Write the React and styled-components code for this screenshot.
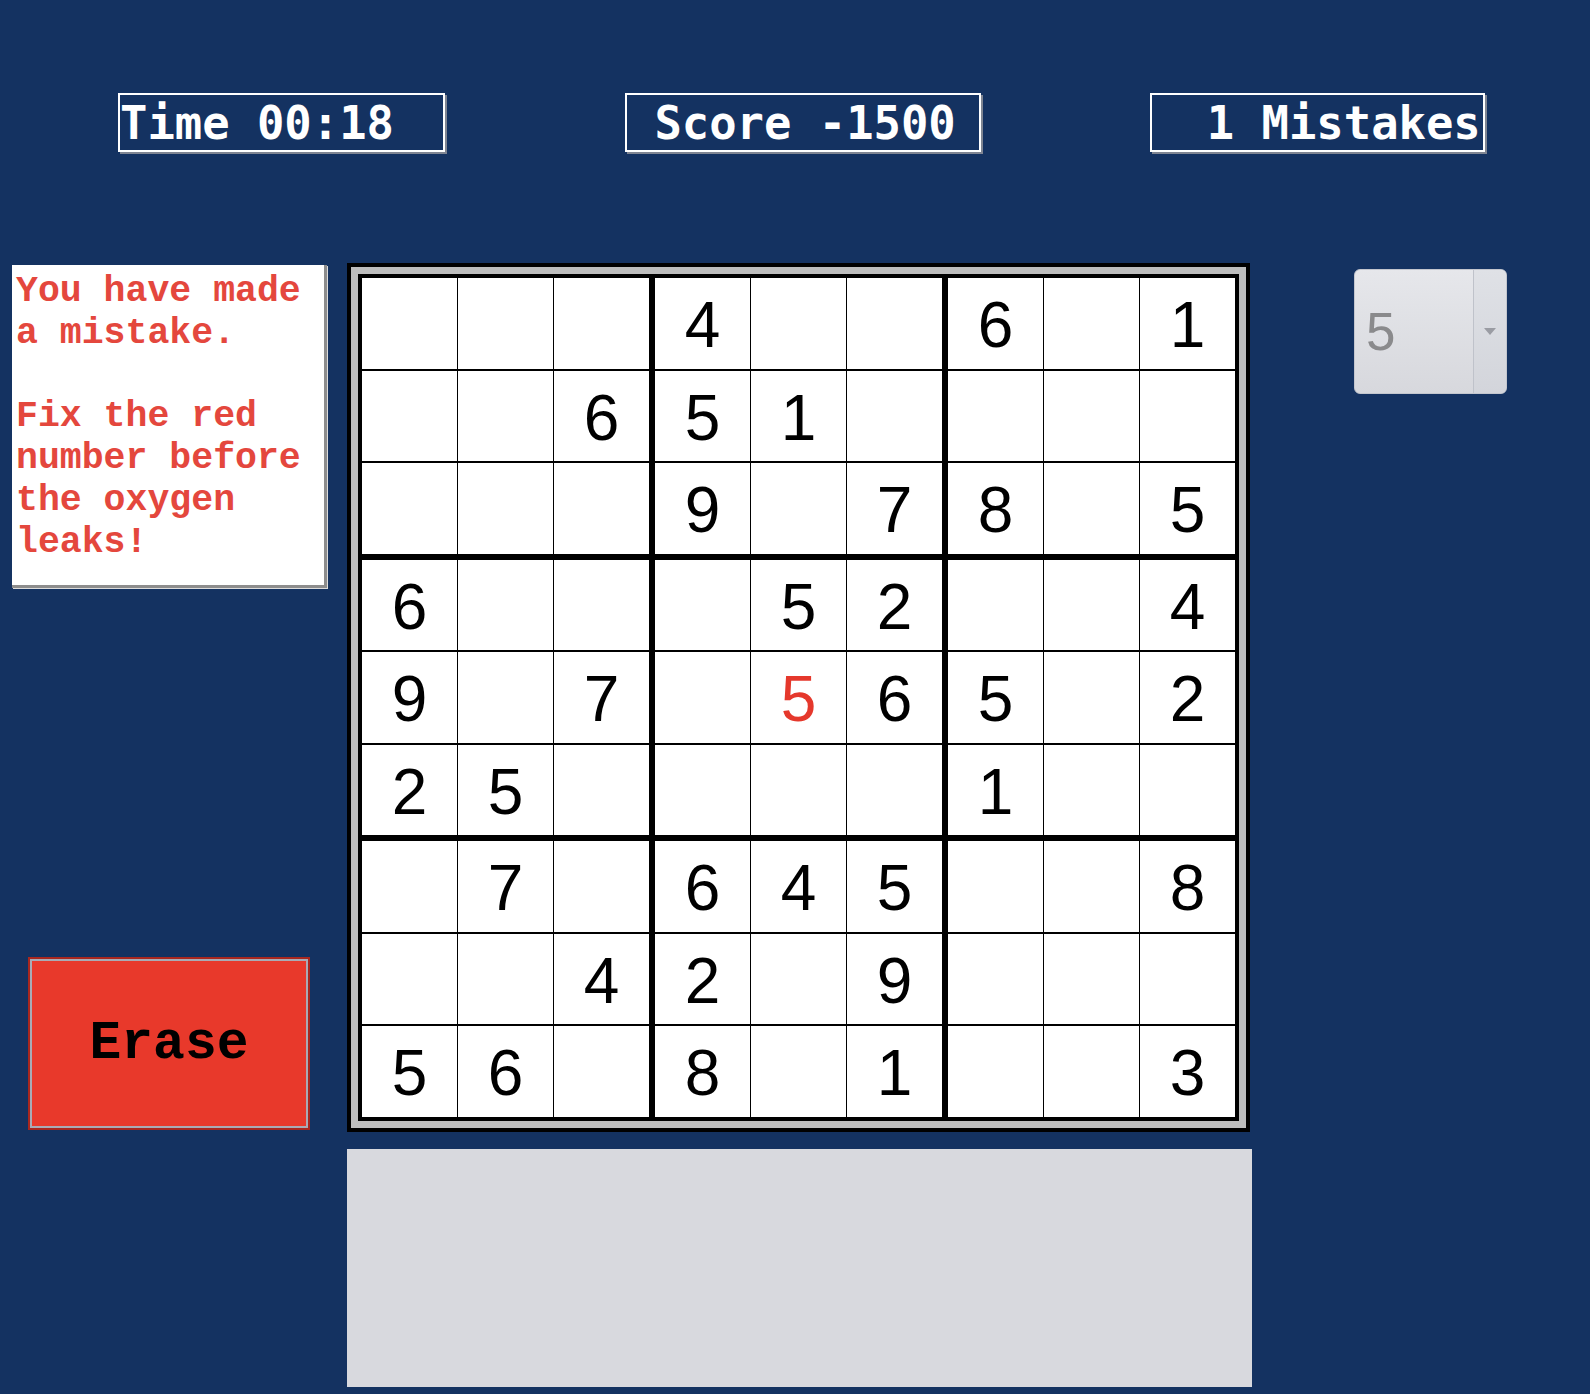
import React from 'react';
import styled, { createGlobalStyle } from 'styled-components';

const Global = createGlobalStyle`
  html, body { margin: 0; padding: 0; background: #143261; }
  body { width: 1590px; height: 1394px; overflow: hidden; }
`;

const Page = styled.div`
  width: 1590px;
  height: 1394px;
  box-sizing: border-box;
  background: #143261;
  padding-top: 93px;
  font-family: "Liberation Sans", Arial, sans-serif;
`;

const Header = styled.div`
  display: flex;
  padding-left: 118px;
`;

const Stat = styled.div`
  box-sizing: border-box;
  width: ${(p) => p.$w}px;
  margin-left: ${(p) => p.$ml || 0}px;
  height: 59px;
  border: 2px solid #ffffff;
  box-shadow: 2px 2px 0 #7f8592;
  padding-top: 3px;
  color: #ffffff;
  font-family: "DejaVu Sans Mono", monospace;
  font-weight: bold;
  font-size: 45.5px;
  line-height: 1;
  white-space: pre;
  display: flex;
  align-items: center;
`;

const Main = styled.div`
  display: flex;
  align-items: flex-start;
  margin-top: 111px;
  padding-left: 12px;
`;

const LeftCol = styled.div`
  width: 315px;
  display: flex;
  flex-direction: column;
`;

const Message = styled.div`
  box-sizing: border-box;
  width: 315px;
  height: 323px;
  margin-top: 2px;
  background: #ffffff;
  border-right: 3px solid #8d8d8d;
  border-bottom: 3px solid #8d8d8d;
  box-shadow: 1px 1px 0 #dcdcdc;
  padding: 6px 0 0 4px;
  color: #e4473d;
  font-family: "Liberation Mono", "Courier New", monospace;
  font-weight: bold;
  font-size: 36.5px;
  line-height: 41.8px;
`;

const EraseButton = styled.button`
  box-sizing: border-box;
  width: 282px;
  height: 173px;
  margin: 369px 0 0 16px;
  background: #e8392b;
  border: 2px solid #a8271f;
  box-shadow: inset 0 0 0 2px #a9abb5;
  color: #000000;
  font-family: "Liberation Mono", "Courier New", monospace;
  font-weight: bold;
  font-size: 53px;
  padding: 0;
  cursor: pointer;
`;

const CenterCol = styled.div`
  width: 905px;
  margin-left: 20px;
  display: flex;
  flex-direction: column;
`;

const Board = styled.div`
  box-sizing: border-box;
  width: 903px;
  border: 4px solid #000000;
  background: #bdbdbd;
  padding: 7px;
`;

const Grid = styled.div`
  display: grid;
  grid-template-columns: repeat(9, auto);
  border: 4px solid #000000;
  background: #ffffff;
`;

const Cell = styled.div`
  width: 95px;
  height: 86.5px;
  padding-top: 4px;
  border-right: ${(p) => (p.$col === 8 ? 0 : p.$col % 3 === 2 ? 6 : 1)}px solid #000;
  border-bottom: ${(p) => (p.$row === 8 ? 0 : p.$row % 3 === 2 ? 6 : 2)}px solid #000;
  display: flex;
  align-items: center;
  justify-content: center;
  font-family: "Liberation Sans", Arial, sans-serif;
  font-size: 64px;
  color: ${(p) => (p.$error ? '#e5382c' : '#000000')};
`;

const Panel = styled.div`
  width: 905px;
  height: 238px;
  margin-top: 17px;
  background: #d8d9de;
`;

const Select = styled.div`
  box-sizing: border-box;
  width: 153px;
  height: 125px;
  margin: 6px 0 0 102px;
  display: flex;
  border: 1px solid #c3c6ce;
  border-radius: 6px;
  background: linear-gradient(#e6e7eb, #d7d8dd);
  overflow: hidden;
`;

const SelectValue = styled.div`
  flex: 1;
  display: flex;
  align-items: center;
  padding-left: 11px;
  font-family: "Liberation Sans", Arial, sans-serif;
  font-size: 53px;
  color: #8a8a8c;
`;

const SelectArrow = styled.div`
  width: 32px;
  border-left: 1px solid #bfc2ca;
  background: linear-gradient(#dfe1e6, #d3d5db);
  display: flex;
  align-items: center;
  justify-content: center;
`;

const Triangle = styled.div`
  width: 0;
  height: 0;
  border-left: 6px solid transparent;
  border-right: 6px solid transparent;
  border-top: 7px solid #9a9ca3;
`;

const puzzle = [
  '   4  6 1',
  '  651    ',
  '   9 78 5',
  '6   52  4',
  '9 7 565 2',
  '25    1  ',
  ' 7 645  8',
  '  42 9   ',
  '56 8 1  3',
];

export default function App() {
  return (
    <Page>
      <Global />
      <Header>
        <Stat $w={327}>Time 00:18</Stat>
        <Stat $w={356} $ml={180}>{' Score -1500'}</Stat>
        <Stat $w={335} $ml={169}>{'  1 Mistakes'}</Stat>
      </Header>
      <Main>
        <LeftCol>
          <Message>
            You have made a mistake.
            <br />
            <br />
            Fix the red number before the oxygen leaks!
          </Message>
          <EraseButton>Erase</EraseButton>
        </LeftCol>
        <CenterCol>
          <Board>
            <Grid>
              {puzzle.map((line, r) =>
                line.split('').map((ch, c) => (
                  <Cell key={`${r}-${c}`} $row={r} $col={c} $error={r === 4 && c === 4}>
                    {ch.trim()}
                  </Cell>
                ))
              )}
            </Grid>
          </Board>
          <Panel />
        </CenterCol>
        <Select>
          <SelectValue>5</SelectValue>
          <SelectArrow>
            <Triangle />
          </SelectArrow>
        </Select>
      </Main>
    </Page>
  );
}
